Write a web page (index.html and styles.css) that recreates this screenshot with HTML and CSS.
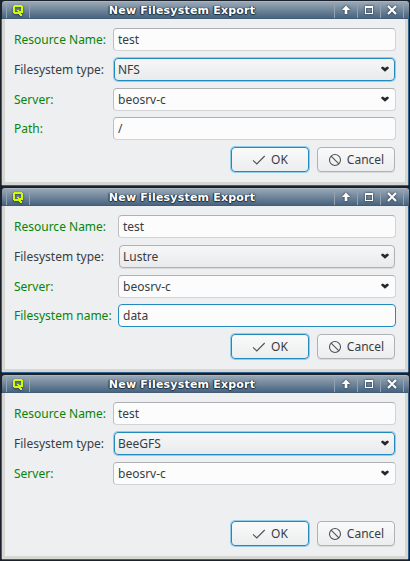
FILE: index.html
```
<!DOCTYPE html>
<html lang="en">
<head>
<meta charset="utf-8">
<title>New Filesystem Export</title>
<link rel="stylesheet" href="styles.css">
</head>
<body>
<svg class="defs" width="0" height="0">
  <defs>
    <symbol id="logo" viewBox="0 0 10 11"><path fill="#d2fa00" fill-rule="evenodd" d="M1 0H9V1H10V8H8V9H9V11H7V10H6V9H1V8H0V1H1ZM2 2V7H5V6H4V5H6V6H8V2Z"/></symbol>
    <symbol id="up" viewBox="0 0 10 10"><path d="M5 .6L9.2 5H6.3V9H3.7V5H.8Z"/></symbol>
    <symbol id="max" viewBox="0 0 10 10"><path fill-rule="evenodd" d="M1 1H9V9H1ZM2 3V8H8V3Z"/></symbol>
    <symbol id="close" viewBox="0 0 10 10"><path fill="none" stroke="#fff" stroke-width="2.1" d="M1 1L9 9M9 1L1 9"/></symbol>
    <symbol id="arrow" viewBox="0 0 8 6"><path d="M.3 1.2L1.8 .4L4 2L6.2 .4L7.7 1.2V2.4L4 5.8L.3 2.4Z"/></symbol>
    <symbol id="check" viewBox="0 0 14 10"><path fill="none" stroke="#4d5255" stroke-width="1.1" d="M1 5.3L4.8 9L12.7 1"/></symbol>
    <symbol id="ban" viewBox="0 0 14 14"><g fill="none" stroke="#4d5255" stroke-width="1.1"><circle cx="7" cy="7" r="5.5"/><path d="M3.1 3.1L10.9 10.9"/></g></symbol>
  </defs>
</svg>

<section class="window">
  <header class="titlebar">
    <div class="app"><svg class="logo"><use href="#logo"/></svg></div>
    <h1>New Filesystem Export</h1>
    <div class="tool"><svg><use href="#up"/></svg></div>
    <div class="tool"><svg><use href="#max"/></svg></div>
    <div class="tool"><svg><use href="#close"/></svg></div>
    <div class="tail"></div>
  </header>
  <div class="content">
    <div class="form">
      <label class="req">Resource Name:</label><div class="field">test</div>
      <label>Filesystem type:</label><div class="field select focus">NFS<svg><use href="#arrow"/></svg></div>
      <label class="req">Server:</label><div class="field">beosrv-c<svg><use href="#arrow"/></svg></div>
      <label class="req">Path:</label><div class="field">/</div>
    </div>
    <div class="actions">
      <div class="button focus"><svg class="check"><use href="#check"/></svg>OK</div>
      <div class="button"><svg class="ban"><use href="#ban"/></svg>Cancel</div>
    </div>
  </div>
</section>

<section class="window">
  <header class="titlebar">
    <div class="app"><svg class="logo"><use href="#logo"/></svg></div>
    <h1>New Filesystem Export</h1>
    <div class="tool"><svg><use href="#up"/></svg></div>
    <div class="tool"><svg><use href="#max"/></svg></div>
    <div class="tool"><svg><use href="#close"/></svg></div>
    <div class="tail"></div>
  </header>
  <div class="content">
    <div class="form wide">
      <label class="req">Resource Name:</label><div class="field">test</div>
      <label>Filesystem type:</label><div class="field select">Lustre<svg><use href="#arrow"/></svg></div>
      <label class="req">Server:</label><div class="field">beosrv-c<svg><use href="#arrow"/></svg></div>
      <label class="req">Filesystem name:</label><div class="field active">data</div>
    </div>
    <div class="actions">
      <div class="button focus"><svg class="check"><use href="#check"/></svg>OK</div>
      <div class="button"><svg class="ban"><use href="#ban"/></svg>Cancel</div>
    </div>
  </div>
</section>

<section class="window">
  <header class="titlebar">
    <div class="app"><svg class="logo"><use href="#logo"/></svg></div>
    <h1>New Filesystem Export</h1>
    <div class="tool"><svg><use href="#up"/></svg></div>
    <div class="tool"><svg><use href="#max"/></svg></div>
    <div class="tool"><svg><use href="#close"/></svg></div>
    <div class="tail"></div>
  </header>
  <div class="content">
    <div class="form">
      <label class="req">Resource Name:</label><div class="field">test</div>
      <label>Filesystem type:</label><div class="field select focus">BeeGFS<svg><use href="#arrow"/></svg></div>
      <label class="req">Server:</label><div class="field">beosrv-c<svg><use href="#arrow"/></svg></div>
    </div>
    <div class="actions">
      <div class="button focus"><svg class="check"><use href="#check"/></svg>OK</div>
      <div class="button"><svg class="ban"><use href="#ban"/></svg>Cancel</div>
    </div>
  </div>
</section>
</body>
</html>
```
FILE: styles.css
```
* { box-sizing: border-box; }
body {
  margin: 0;
  width: 410px;
  height: 561px;
  overflow: hidden;
  background: #1b222b;
  color: #383d42;
  font: 12px/17px "Noto Sans", sans-serif;
}
svg { display: block; flex: none; }
.defs { display: none; }
.window {
  display: flex;
  flex-direction: column;
  height: 187px;
  padding: 1px;
  background: #1b222b;
}
.titlebar {
  display: flex;
  flex: none;
  height: 18px;
  margin-left: 1px;
  border-top: 1px solid #aab5c1;
  border-bottom: 1px solid #435d76;
  border-radius: 3px 3px 0 0;
  background: linear-gradient(#98a7b6, #48647f);
}
.app {
  display: flex;
  justify-content: center;
  width: 24px;
  margin-left: 4px;
  padding-top: 3px;
  border-left: 1px solid #93a3b2;
  border-right: 1px solid #93a3b2;
}
.logo { width: 10px; height: 11px; filter: drop-shadow(0 1px 1px #2b3f52); }
h1 {
  flex: 1;
  margin: 0;
  padding: 1px 0 0;
  color: #fff;
  text-align: center;
  font: bold 11px/16px "DejaVu Sans", sans-serif;
  letter-spacing: .2px;
  text-shadow: 0 1px 1px #1d2c3b, 1px 0 1px #1d2c3b, -1px 0 1px #1d2c3b;
}
.tool {
  display: flex;
  justify-content: center;
  width: 23px;
  padding-top: 3px;
  border-left: 1px solid #93a3b2;
}
.tool svg { width: 10px; height: 10px; fill: #fff; filter: drop-shadow(0 0 1px #1d2c3b); }
.tail { width: 6px; border-left: 1px solid #93a3b2; }
.content {
  display: flex;
  flex: 1;
  flex-direction: column;
  justify-content: space-between;
  margin: 0 1px 1px;
  padding: 9px 9px 10px;
  border: 3px solid #d6d6d2;
  border-top: 0;
  background: #eeeff1;
  box-shadow: 0 1px 0 #32608c, 1px 0 0 #32608c, -1px 0 0 #32608c;
}
.form {
  display: grid;
  grid-template-columns: 99px 283px;
  grid-template-rows: 23px 23px 23px 23px;
  row-gap: 7px;
}
.form.wide { grid-template-columns: 104px 278px; }
.form > :nth-child(7), .form > :nth-child(8) { margin-top: -1px; margin-bottom: 1px; }
label { line-height: 23px; white-space: nowrap; }
.req { color: #088408; }
.field {
  display: flex;
  align-items: center;
  justify-content: space-between;
  padding: 0 6px 0 4px;
  border: 1px solid #d2d3d4;
  border-top-color: #aeb0b3;
  border-left-color: #bcbec0;
  border-radius: 4px;
  background: #fcfcfc;
}
.field svg { width: 8px; height: 6px; margin-bottom: 1px; fill: #24292d; }
.select {
  margin: 0 1px;
  padding: 0 5px 0 3px;
  border-color: #afb1b4;
  background: linear-gradient(#f7f7f8, #e9eaeb);
  box-shadow: 0 1px 0 #d9dadc;
}
.actions { display: flex; justify-content: flex-end; gap: 8px; padding-right: 1px; }
.button {
  display: flex;
  align-items: center;
  justify-content: center;
  width: 78px;
  height: 25px;
  border: 1px solid #afb1b4;
  border-radius: 4px;
  background: linear-gradient(#fafafa, #ecedee);
  box-shadow: 0 1px 0 #d9dadc;
}
.focus { border-color: #218bbf; box-shadow: 0 0 0 1px #93cee9; }
.active { border-color: #218bbf; }
.check { width: 14px; height: 10px; margin-right: 5px; }
.ban { width: 14px; height: 14px; margin-right: 5px; }
```
